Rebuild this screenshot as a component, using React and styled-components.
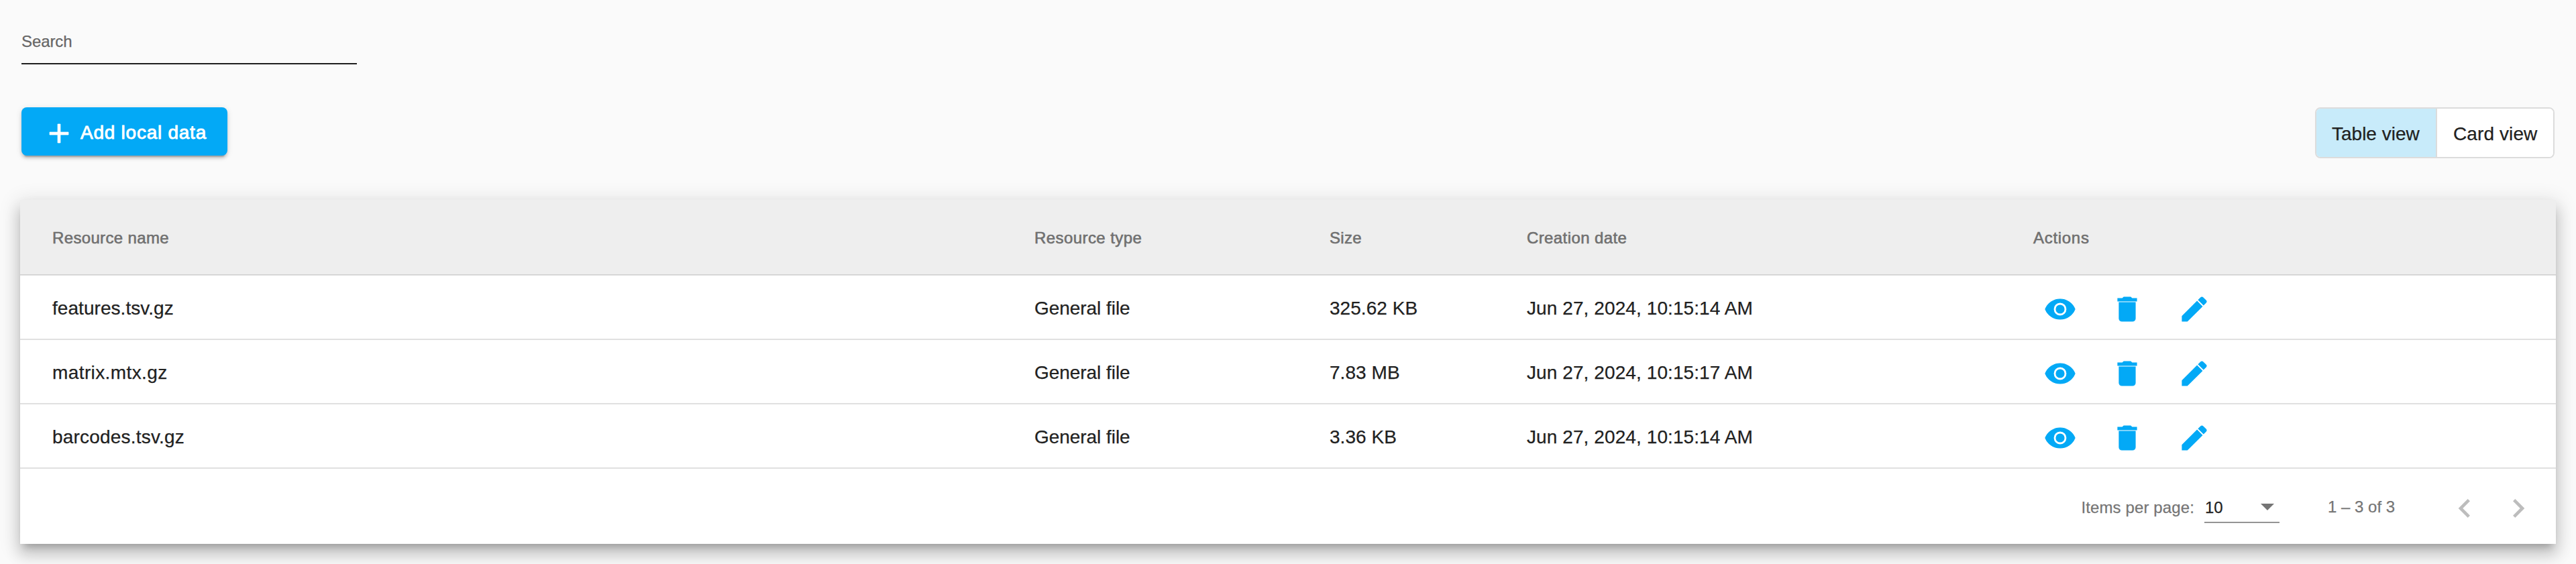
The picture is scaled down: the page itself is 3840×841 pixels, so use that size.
import React from "react";
import styled, { createGlobalStyle } from "styled-components";

const Global = createGlobalStyle`
  * { box-sizing: border-box; }
  body {
    margin: 0;
    background: #fafafa;
    font-family: "Liberation Sans", Arial, sans-serif;
    color: rgba(0, 0, 0, 0.87);
    -webkit-text-stroke: 0.25px currentColor;
  }
  button { font-family: inherit; border: 0; background: none; padding: 0; }
`;

const Page = styled.main`
  height: 841px;
  padding: 0 30px;
  overflow: hidden;
`;

const SearchField = styled.label`
  display: block;
  width: 500px;
  height: 96px;
  margin-left: 2px;
  padding-top: 48px;
  border-bottom: 2px solid #1e1e1e;
  font-size: 24px;
  line-height: 28px;
  letter-spacing: -0.1px;
  color: #666;
`;

const Toolbar = styled.div`
  display: flex;
  justify-content: space-between;
  align-items: flex-start;
  margin: 64px 2px 0;
  height: 138px;
`;

const AddButton = styled.button`
  display: flex;
  align-items: center;
  width: 307px;
  height: 72px;
  padding: 3px 0 0 32px;
  border-radius: 8px;
  background: #03a9f6;
  color: #fff;
  font-size: 28px;
  line-height: 69px;
  letter-spacing: 0.75px;
  -webkit-text-stroke: 0.9px #fff;
  box-shadow: 0 6px 2px -4px rgba(0, 0, 0, 0.2), 0 4px 4px rgba(0, 0, 0, 0.14),
    0 2px 10px rgba(0, 0, 0, 0.12);

  svg { margin: 2px 8px 0 0; }
`;

const ToggleGroup = styled.div`
  display: flex;
  height: 76px;
  border: 2px solid #dcdcdc;
  border-radius: 8px;
  background: #fff;
  overflow: hidden;
`;

const Toggle = styled.button`
  width: ${(p) => p.$width}px;
  padding: 0 0 0 23px;
  text-align: left;
  font-size: 28px;
  line-height: 75px;
  letter-spacing: ${(p) => p.$spacing || 0}px;
  color: #212121;
  background: ${(p) => (p.$active ? "#c8ebfa" : "#fff")};
  -webkit-text-stroke: 0.25px currentColor;

  & + & { border-left: 2px solid #dcdcdc; padding-left: 24px; }
`;

const Card = styled.section`
  background: #fff;
  box-shadow: 0 10px 10px -6px rgba(0, 0, 0, 0.2), 0 16px 20px 2px rgba(0, 0, 0, 0.14),
    0 6px 28px 4px rgba(0, 0, 0, 0.12);
`;

const columns = "1464px 440px 294px 755px 1fr";

const HeaderRow = styled.div`
  display: grid;
  grid-template-columns: ${columns};
  height: 113px;
  padding-left: 48px;
  background: #eee;
  border-bottom: 1px solid #e0e0e0;
  box-shadow: inset 0 -1px #cfcfcf;
`;

const HeaderCell = styled.div`
  font-size: 24px;
  line-height: 111px;
  padding-top: 1px;
  letter-spacing: ${(p) => p.$spacing}px;
  color: #707070;
  -webkit-text-stroke: 0.6px #707070;
`;

const Row = styled.div`
  display: grid;
  grid-template-columns: ${columns};
  height: 96px;
  padding-left: 48px;
  border-bottom: 2px solid #e0e0e0;
`;

const Cell = styled.div`
  font-size: 28px;
  line-height: 97px;
  height: 94px;
  letter-spacing: ${(p) => p.$spacing || 0}px;
  color: #212121;
`;

const Actions = styled.div`
  display: flex;
  align-items: center;
  gap: 52px;
  height: 94px;
  padding: 5px 0 0 16px;
`;

const IconButton = styled.button`
  display: flex;
  align-items: center;
  justify-content: center;
  width: ${(p) => p.$size}px;
  height: ${(p) => p.$size}px;
  color: ${(p) => p.$color};
`;

const Paginator = styled.div`
  display: flex;
  justify-content: flex-end;
  height: 112px;
  padding-right: 16px;
  font-size: 24px;
  line-height: 112px;
  color: #757575;
`;

const PageSizeLabel = styled.span`
  margin-right: 15px;
  padding-top: 2px;
  letter-spacing: 0.12px;
`;

const PageSizeSelect = styled.div`
  display: flex;
  justify-content: space-between;
  width: 112px;
  height: 43px;
  margin: 38px 72px 0 0;
  padding: 0 8px 0 1px;
  border-bottom: 2px solid #949494;
  line-height: 40px;
  color: #212121;
`;

const Caret = styled.span`
  width: 0;
  height: 0;
  margin-top: 14px;
  border: 10px solid transparent;
  border-top-color: #757575;
  border-bottom: 0;
`;

const Range = styled.span`
  width: 164px;
  line-height: 113px;
`;

const PagerButtons = styled.div`
  display: flex;
  padding-top: 19px;
`;

const paths = {
  plus: "M19 13h-6v6h-2v-6H5v-2h6V5h2v6h6v2z",
  view: "M12 4.5C7 4.5 2.73 7.61 1 12c1.73 4.39 6 7.5 11 7.5s9.27-3.11 11-7.5c-1.73-4.39-6-7.5-11-7.5zM12 17c-2.76 0-5-2.24-5-5s2.24-5 5-5 5 2.24 5 5-2.24 5-5 5zm0-8c-1.66 0-3 1.34-3 3s1.34 3 3 3 3-1.34 3-3-1.34-3-3-3z",
  remove: "M6 19c0 1.1.9 2 2 2h8c1.1 0 2-.9 2-2V7H6v12zM19 4h-3.5l-1-1h-5l-1 1H5v2h14V4z",
  edit: "M3 17.25V21h3.75L17.81 9.94l-3.75-3.75L3 17.25zM20.71 7.04c.39-.39.39-1.02 0-1.41l-2.34-2.34c-.39-.39-1.02-.39-1.41 0l-1.83 1.83 3.75 3.75 1.83-1.83z",
  prev: "M15.41 7.41L14 6l-6 6 6 6 1.41-1.41L10.83 12z",
  next: "M10 6L8.59 7.41 13.17 12l-4.58 4.59L10 18l6-6z",
};

const Icon = ({ name, size = 48, outline = 0 }) => (
  <svg
    width={size}
    height={size}
    viewBox="0 0 24 24"
    fill="currentColor"
    stroke={outline ? "currentColor" : "none"}
    strokeWidth={outline}
  >
    <path d={paths[name]} />
  </svg>
);

const headers = [
  ["Resource name", 0.35],
  ["Resource type", 0.42],
  ["Size", 0.3],
  ["Creation date", 0.4],
  ["Actions", 0.7],
];

const files = [
  { name: "features.tsv.gz", spacing: 0.05, size: "325.62 KB", date: "Jun 27, 2024, 10:15:14 AM" },
  { name: "matrix.mtx.gz", spacing: 0.4, size: "7.83 MB", date: "Jun 27, 2024, 10:15:17 AM" },
  { name: "barcodes.tsv.gz", spacing: 0.2, size: "3.36 KB", date: "Jun 27, 2024, 10:15:14 AM" },
];

const actions = ["view", "remove", "edit"];

export default function App() {
  return (
    <Page>
      <Global />
      <SearchField>Search</SearchField>
      <Toolbar>
        <AddButton>
          <Icon name="plus" outline={0.35} />
          Add local data
        </AddButton>
        <ToggleGroup>
          <Toggle $active $width={178}>Table view</Toggle>
          <Toggle $width={175} $spacing={0.1}>Card view</Toggle>
        </ToggleGroup>
      </Toolbar>
      <Card>
        <HeaderRow>
          {headers.map(([label, spacing]) => (
            <HeaderCell key={label} $spacing={spacing}>{label}</HeaderCell>
          ))}
        </HeaderRow>
        {files.map((f) => (
          <Row key={f.name}>
            <Cell $spacing={f.spacing}>{f.name}</Cell>
            <Cell $spacing={-0.05}>General file</Cell>
            <Cell $spacing={0.05}>{f.size}</Cell>
            <Cell $spacing={0.09}>{f.date}</Cell>
            <Actions>
              {actions.map((a) => (
                <IconButton key={a} $size={48} $color="#03a9f6" aria-label={a}>
                  <Icon name={a} outline={0.6} />
                </IconButton>
              ))}
            </Actions>
          </Row>
        ))}
        <Paginator>
          <PageSizeLabel>Items per page:</PageSizeLabel>
          <PageSizeSelect>
            10
            <Caret />
          </PageSizeSelect>
          <Range>1 – 3 of 3</Range>
          <PagerButtons>
            <IconButton $size={80} $color="#bdbdbd" aria-label="previous">
              <Icon name="prev" size={56} />
            </IconButton>
            <IconButton $size={80} $color="#bdbdbd" aria-label="next">
              <Icon name="next" size={56} />
            </IconButton>
          </PagerButtons>
        </Paginator>
      </Card>
    </Page>
  );
}
